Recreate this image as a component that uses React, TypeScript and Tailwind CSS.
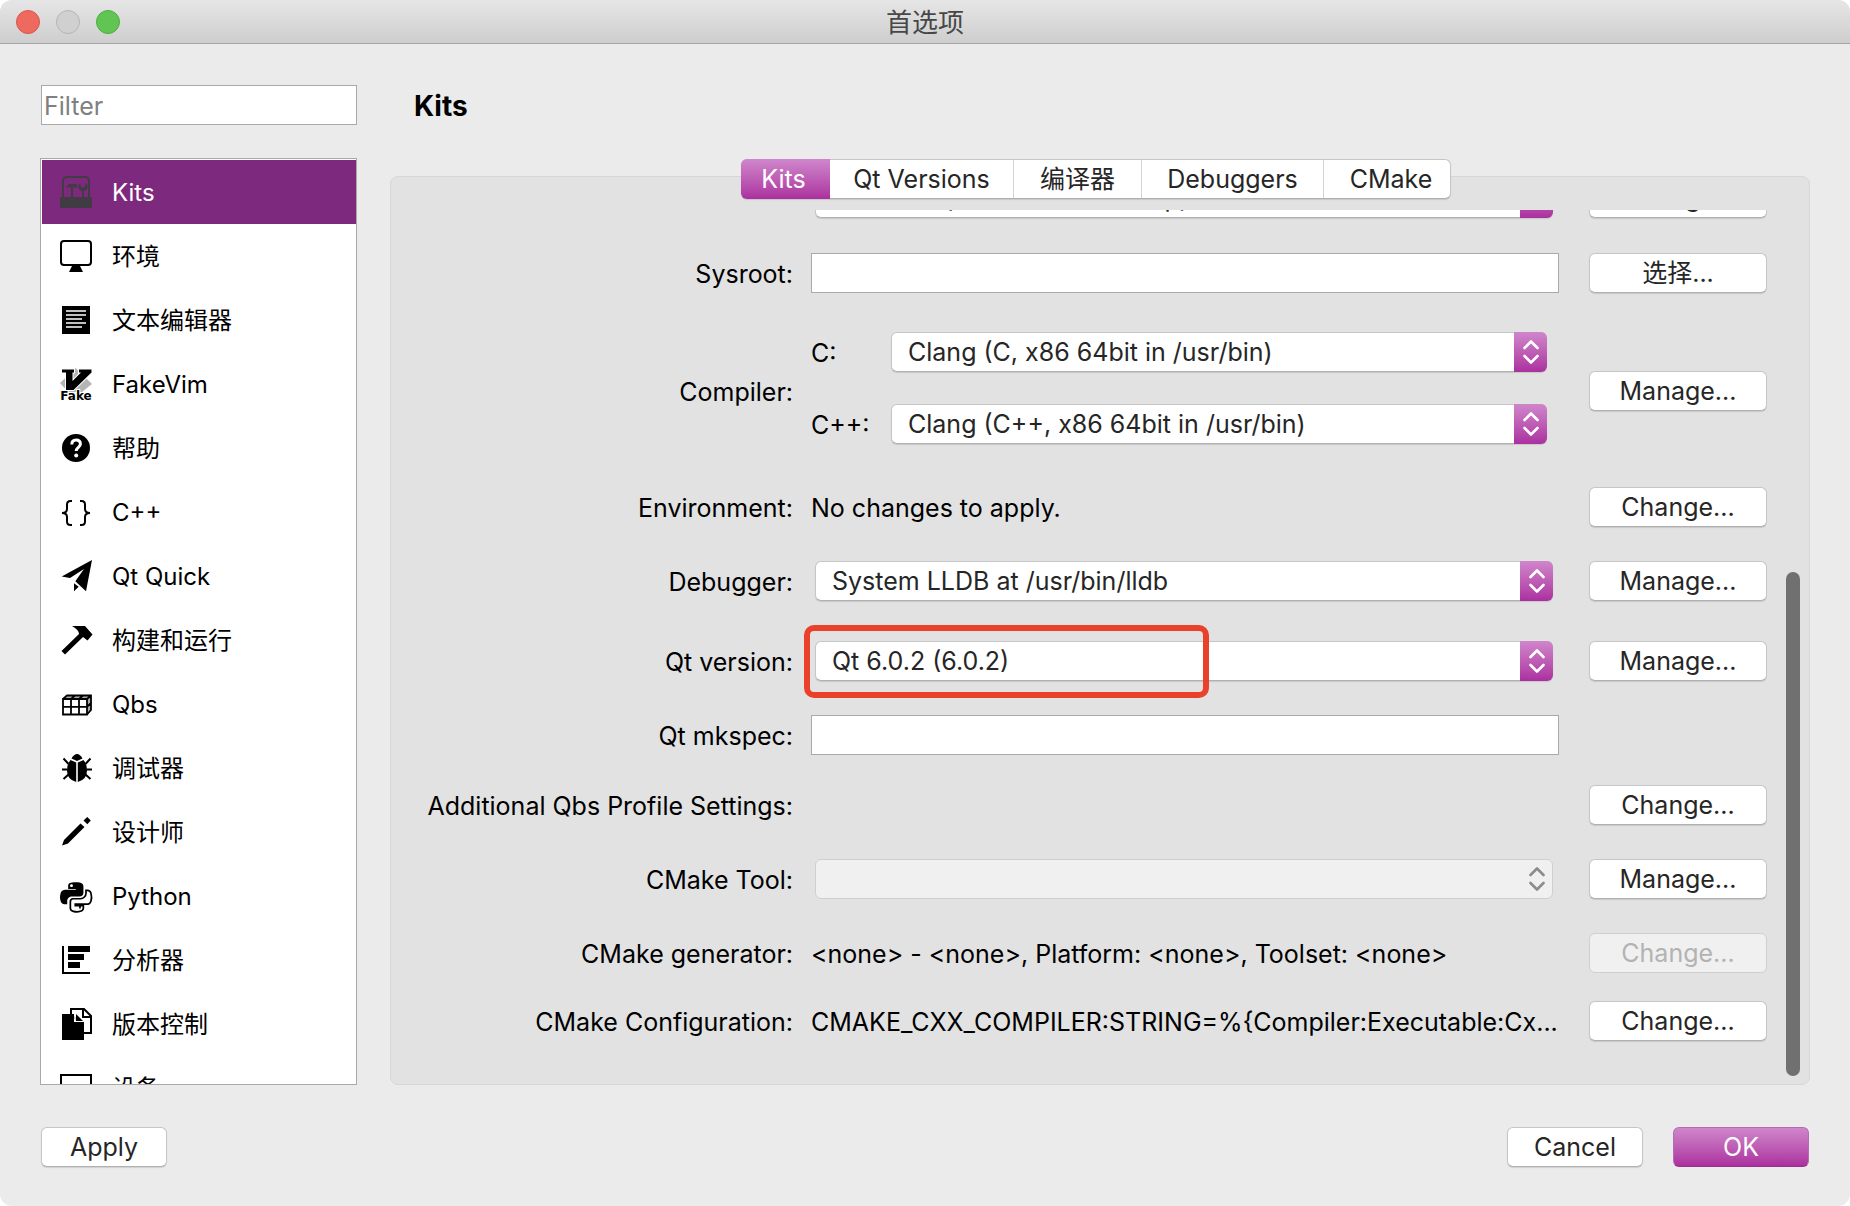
import type { ReactNode } from "react";

const accent = "bg-linear-to-b from-[#cf86cb] to-[#ab2f9f]";
const buttonBase = "h-10 rounded-md border leading-8";
const plainButton =
  "border-[#c6c6c6] border-b-[#b0b0b0] bg-white text-[#262626] shadow-[0_1px_1px_rgba(0,0,0,0.12)]";
const fadedButton = "border-[#cfcfcf] bg-[#f0f0f0] text-[#b3b3b3]";

/* ---------- Sidebar icons, all on a 32 × 32 grid ---------- */

function Icon({ children }: { children: ReactNode }) {
  return (
    <svg viewBox="0 0 32 32" className="size-8 shrink-0 overflow-visible" fill="currentColor" aria-hidden="true">
      {children}
    </svg>
  );
}

const KitsIcon = () => (
  <Icon>
    <g fill="#413c43">
      <path d="M3 21V5a4 4 0 0 1 4-4h18a4 4 0 0 1 4 4v16" fill="none" stroke="#413c43" strokeWidth="2" />
      <path d="M0 21h32v11H0z" />
      <path d="M6.5 10.5 9 8h8v3.500h-4V21h-2v-9.500H6.500z" />
      <path d="M20.500 7v3l2.500 2 2.500-2V7c2 1 2.500 3 2 5-.4 1.600-1.800 2.600-3.500 3V21h-2v-6c-1.700-.4-3.100-1.400-3.500-3-.5-2 0-4 2-5z" />
    </g>
  </Icon>
);

const MonitorIcon = () => (
  <Icon>
    <rect x="1" y="1" width="30" height="24" rx="3" fill="none" stroke="currentColor" strokeWidth="2" />
    <path d="M12 26h8l3 6H9z" />
  </Icon>
);

const TextIcon = () => (
  <Icon>
    <path d="M2 2h28v28H2z" />
    <path d="M6 7h20M6 11h20M6 15h16M6 19h20M6 23h16" stroke="#fff" strokeWidth="1.700" />
  </Icon>
);

const VimIcon = () => (
  <Icon>
    <path d="M15.500 0 32 16 22 24H8L0 15z" fill="#b5b5b5" />
    <path d="M2 1.500h12v3h-1.500V13L21 4.500h-2v-3h12.500v3L13.500 22H6V4.500H2z" stroke="#fff" strokeWidth="2" paintOrder="stroke" />
    <text
      x="16"
      y="32"
      textAnchor="middle"
      fontFamily="DejaVu Sans, sans-serif"
      fontWeight="700"
      fontSize="12"
      stroke="#fff"
      strokeWidth="2"
      paintOrder="stroke"
    >
      Fake
    </text>
  </Icon>
);

const HelpIcon = () => (
  <Icon>
    <circle cx="16" cy="16" r="14" />
    <path d="M11.800 12.500c0-3 1.800-4.500 4.300-4.500s4.300 1.500 4.300 4c0 3.200-4.200 3.400-4.200 7" fill="none" stroke="#fff" strokeWidth="3" />
    <circle cx="16.200" cy="23.500" r="2" fill="#fff" />
  </Icon>
);

const BracesIcon = () => (
  <Icon>
    <path
      d="M12 5H10.500Q7 5 7 8.500V13Q7 17 2 17 7 17 7 21V25.500Q7 29 10.500 29H12M20 5h1.500Q25 5 25 8.500V13Q25 17 30 17 25 17 25 21V25.500Q25 29 21.500 29H20"
      fill="none"
      stroke="currentColor"
      strokeWidth="2"
    />
  </Icon>
);

const PlaneIcon = () => (
  <Icon>
    <path d="M32 0 1.700 16.500 10 18 24 9 15.300 21.300 26 31.300zM14 23.300l4.700 3.400L14 31.300z" />
  </Icon>
);

const HammerIcon = () => (
  <Icon>
    <path d="M12 2h13l7.500 8.500-5 6L23 13 5 30.500 1.500 27 19 10q0-4-7-8z" />
  </Icon>
);

const QbsIcon = () => (
  <Icon>
    <path d="M3 11 7 7.500h24v14.500l-4 4.500V11z" fill="#aaa" />
    <path d="M3 11h24v15.500H3z" fill="#fff" />
    <path
      d="M3 11h24v15.500H3zM3 18.800h24l4-4M11 11v15.500M19 11v15.500M3 11l4-3.500h24V22l-4 4.500M27 11l4-3.500M11 11l4-3.500M19 11l4-3.500"
      fill="none"
      stroke="currentColor"
      strokeWidth="1.800"
    />
  </Icon>
);

const BugIcon = () => (
  <Icon>
    <path d="M11.500 6.500Q14 2 17 2t5.500 4.500L17 9z" />
    <path d="M16.200 10.500 10.500 8Q7 12 7 18.500q0 9 9.200 11.500zM17.800 10.500 23.500 8Q27 12 27 18.500q0 9-9.200 11.500z" />
    <path d="M8.500 12 3.500 6.500M7.500 17.500H2M8.500 22.500l-5 4.500M25.500 12l5-5.500M26.500 17.500H32M25.500 22.500l5 4.500" stroke="currentColor" strokeWidth="2" />
  </Icon>
);

const PencilIcon = () => (
  <Icon>
    <path d="M2 29.500 4 24 20.500 7.500l4 3.500L8 27.500zM27.300 1l3.500 3.500-3.500 3.800-3.800-3.800z" />
  </Icon>
);

const PythonIcon = () => (
  <Icon>
    <g transform="matrix(.0714 0 0 .067 0 0)">
      <path d="M167.800 248.100h106.800c29.700 0 53.400-24.500 53.400-54.300V91.900c0-29-24.400-50.700-53.400-55.600-35.800-5.900-74.700-5.600-106.800.1-45.200 8-53.400 24.700-53.400 55.600v40.700h106.900v13.600h-147c-31.100 0-58.300 18.700-66.800 54.200-9.800 40.700-10.200 66.100 0 108.600 7.600 31.600 25.700 54.200 56.800 54.200H101v-48.800c0-35.300 30.500-66.400 66.800-66.400zm-6.700-142.600c-11.100 0-20.100-9.100-20.100-20.300.1-11.300 9-20.400 20.100-20.400 11 0 20.100 9.200 20.100 20.400s-9 20.300-20.100 20.300z" />
      <path
        d="M434 200c-7.700-30.900-22.300-45-50-45h-20v42c0 44-34 82-76 82H185c-25 0-40 18-40 44v98c0 26 18 40 42 47 33 9.500 64 11 98 0 24-7.500 42-20 42-46v-40H214v-22h178c28 0 32-18 42-48 11-33 10.500-68 0-112zM280 390v34"
        fill="none"
        stroke="currentColor"
        strokeWidth="24"
      />
    </g>
  </Icon>
);

const AnalyzerIcon = () => (
  <Icon>
    <path d="M2 2h2v26h26v2H2zM8 2h22v6H8zM8 10h16v6H8zM8 18h12v6H8z" />
  </Icon>
);

const VersionIcon = () => (
  <Icon>
    <path d="M11 1h13l7 7v17H20V14L11 7z" fill="#fff" stroke="currentColor" strokeWidth="2" />
    <path d="M23 1v8h8" fill="none" stroke="currentColor" strokeWidth="2" />
    <path d="M2 6h12v8h10v18H2z" />
    <path d="M15 5v8.200h9" fill="none" stroke="#fff" strokeWidth="1.600" />
    <path d="M16 6v7h7z" />
  </Icon>
);

const DeviceIcon = () => (
  <Icon>
    <rect x="1" y="3" width="30" height="20" fill="none" stroke="currentColor" strokeWidth="2" />
  </Icon>
);

const categories = [
  { label: "Kits", icon: <KitsIcon /> },
  { label: "环境", icon: <MonitorIcon /> },
  { label: "文本编辑器", icon: <TextIcon /> },
  { label: "FakeVim", icon: <VimIcon /> },
  { label: "帮助", icon: <HelpIcon /> },
  { label: "C++", icon: <BracesIcon /> },
  { label: "Qt Quick", icon: <PlaneIcon /> },
  { label: "构建和运行", icon: <HammerIcon /> },
  { label: "Qbs", icon: <QbsIcon /> },
  { label: "调试器", icon: <BugIcon /> },
  { label: "设计师", icon: <PencilIcon /> },
  { label: "Python", icon: <PythonIcon /> },
  { label: "分析器", icon: <AnalyzerIcon /> },
  { label: "版本控制", icon: <VersionIcon /> },
  { label: "设备", icon: <DeviceIcon /> },
];

/* ---------- Form parts ---------- */

function Combo({ id, label, value, disabled = false }: { id: string; label?: string; value: string; disabled?: boolean }) {
  return (
    <div className="relative flex h-10 min-w-0 flex-1">
      <select
        id={id}
        aria-label={label}
        disabled={disabled}
        className={`h-10 w-full appearance-none rounded-md border pr-10 pb-px pl-4 leading-9 opacity-100 ${
          disabled
            ? "border-[#cfcfcf] bg-[#f0f0f0]"
            : "border-[#c6c6c6] border-b-[#b0b0b0] bg-white text-[#262626] shadow-[0_1px_1px_rgba(0,0,0,0.12)]"
        }`}
      >
        <option>{value}</option>
      </select>
      <span
        className={`pointer-events-none absolute inset-y-0 right-0 flex w-[33px] items-center justify-center rounded-r-md ${
          disabled ? "text-[#8c8c8c]" : `text-white ${accent}`
        }`}
      >
        <svg viewBox="0 0 16 26" className="h-[26px] w-4" fill="none" stroke="currentColor" strokeWidth="2.600" strokeLinecap="round" strokeLinejoin="round" aria-hidden="true">
          <path d="M1.500 9 8 2.500 14.500 9M1.500 17 8 23.500 14.500 17" />
        </svg>
      </span>
    </div>
  );
}

function Row({
  label,
  htmlFor,
  spacing,
  action,
  actionDisabled = false,
  children,
}: {
  label?: string;
  htmlFor?: string;
  spacing: string;
  action?: string;
  actionDisabled?: boolean;
  children?: ReactNode;
}) {
  return (
    <div className={`grid min-h-10 shrink-0 grid-cols-[372px_minmax(0,1fr)_178px] items-center ${spacing}`}>
      <label htmlFor={htmlFor} className="pt-0.5 text-right whitespace-nowrap">
        {label}
      </label>
      <div className="mr-[30px] ml-[18px] min-w-0 whitespace-nowrap">{children}</div>
      {action && (
        <button
          type="button"
          disabled={actionDisabled}
          className={`${buttonBase} w-full ${actionDisabled ? fadedButton : plainButton}`}
        >
          {action}
        </button>
      )}
    </div>
  );
}

const textBox = "block h-10 w-full border border-[#a9a9a9] bg-white px-1 outline-none";

export default function App() {
  return (
    <div className="flex h-screen flex-col overflow-hidden rounded-xl bg-[#ebebeb] font-['Inter','Noto_Sans_CJK_SC',sans-serif] text-[25px] leading-8 text-black">
      <header className="grid h-11 shrink-0 grid-cols-[1fr_auto_1fr] items-center border-b border-[#a6a6a6] bg-linear-to-b from-[#e6e6e6] to-[#cecece] px-4">
        <div className="flex gap-4">
          <button type="button" aria-label="Close" className="size-6 rounded-full border border-[#d9564c] bg-[#ee695e]" />
          <button type="button" aria-label="Minimize" className="size-6 rounded-full border border-[#b5b5b5] bg-[#d0d0d0]" />
          <button type="button" aria-label="Zoom" className="size-6 rounded-full border border-[#50ac44] bg-[#61c554]" />
        </div>
        <span className="pt-0.5 text-[26px] leading-8 text-[#474747]">首选项</span>
      </header>

      <main className="flex min-h-0 flex-1 gap-[33px] pt-[41px] pr-10 pl-10">
        <aside className="flex w-[317px] shrink-0 flex-col">
          <input
            type="text"
            aria-label="Filter"
            placeholder="Filter"
            className="ml-px h-10 shrink-0 border border-[#a9a9a9] bg-white px-0.5 pt-0.5 outline-none placeholder:text-[#808080]"
          />
          <nav className="mt-[33px] min-h-0 flex-1 overflow-hidden border border-[#a9a9a9] bg-white pt-px pl-px">
            <ul>
              {categories.map((item, i) => (
                <li key={item.label}>
                  <button
                    type="button"
                    className={`flex h-16 w-full items-center gap-5 pl-[18px] text-left text-2xl ${
                      i === 0 ? "bg-[#7d297d] text-white" : "text-black"
                    }`}
                  >
                    {item.icon}
                    <span className="pt-0.5">{item.label}</span>
                  </button>
                </li>
              ))}
            </ul>
          </nav>
        </aside>

        <section className="flex min-w-0 flex-1 flex-col">
          <h1 className="ml-6 h-10 pt-px text-[28px] leading-10 font-bold">Kits</h1>

          <div className="z-10 mt-[34px] flex justify-center">
            <div role="tablist" className="mr-2 flex h-10 rounded-md border border-[#c6c6c6] border-b-[#b0b0b0] bg-white text-[#262626] shadow-[0_1px_1px_rgba(0,0,0,0.12)]">
              <button type="button" role="tab" aria-selected="true" className={`-my-px -ml-px w-[89px] rounded-l-md pr-1 text-white ${accent}`}>
                Kits
              </button>
              <button type="button" role="tab" aria-selected="false" className="w-[183px]">
                Qt Versions
              </button>
              <button type="button" role="tab" aria-selected="false" className="w-32 border-l border-[#d4d4d4]">
                编译器
              </button>
              <button type="button" role="tab" aria-selected="false" className="w-[182px] border-l border-[#d4d4d4]">
                Debuggers
              </button>
              <button type="button" role="tab" aria-selected="false" className="w-[127px] border-l border-[#d4d4d4] pl-2">
                CMake
              </button>
            </div>
          </div>

          <div className="-mt-[23px] flex min-h-0 flex-1 rounded-lg border border-[#d6d6d6] bg-[#e2e2e2] pt-[33px] pr-[9px] pb-2 pl-[30px]">
            <div className="flex min-w-0 flex-1 flex-col overflow-hidden">
              <Row spacing="-mt-8" action="Manage...">
                <div className="mr-1.5 ml-1 flex">
                  <Combo id="device" label="Device" value="Local PC (default for Desktop)" />
                </div>
              </Row>
              <Row label="Sysroot:" htmlFor="sysroot" spacing="mt-[35px]" action="选择...">
                <input id="sysroot" type="text" className={textBox} />
              </Row>
              <Row label="Compiler:" spacing="mt-[39px]" action="Manage...">
                <div className="mr-3 mb-1.5 flex flex-col gap-8">
                  <div className="flex items-center">
                    <label htmlFor="compiler-c" className="w-20 pt-0.5">
                      C:
                    </label>
                    <Combo id="compiler-c" value="Clang (C, x86 64bit in /usr/bin)" />
                  </div>
                  <div className="flex items-center">
                    <label htmlFor="compiler-cxx" className="w-20 pt-0.5">
                      C++:
                    </label>
                    <Combo id="compiler-cxx" value="Clang (C++, x86 64bit in /usr/bin)" />
                  </div>
                </div>
              </Row>
              <Row label="Environment:" spacing="mt-[37px]" action="Change...">
                <p className="pt-0.5">No changes to apply.</p>
              </Row>
              <Row label="Debugger:" htmlFor="debugger" spacing="mt-[34px]" action="Manage...">
                <div className="mr-1.5 ml-1 flex">
                  <Combo id="debugger" value="System LLDB at /usr/bin/lldb" />
                </div>
              </Row>
              <Row label="Qt version:" htmlFor="qt-version" spacing="mt-10" action="Manage...">
                <div className="relative mr-1.5 ml-1 flex">
                  <Combo id="qt-version" value="Qt 6.0.2 (6.0.2)" />
                  <span className="pointer-events-none absolute -top-4 -left-[11px] h-[73px] w-[405px] rounded-[10px] border-6 border-[#e9412a]" />
                </div>
              </Row>
              <Row label="Qt mkspec:" htmlFor="mkspec" spacing="mt-[34px]">
                <input id="mkspec" type="text" className={textBox} />
              </Row>
              <Row label="Additional Qbs Profile Settings:" spacing="mt-[30px]" action="Change..." />
              <Row label="CMake Tool:" htmlFor="cmake-tool" spacing="mt-[34px]" action="Manage...">
                <div className="mr-1.5 ml-1 flex">
                  <Combo id="cmake-tool" value="" disabled />
                </div>
              </Row>
              <Row label="CMake generator:" spacing="mt-[34px]" action="Change..." actionDisabled>
                <p className="pt-0.5">&lt;none&gt; - &lt;none&gt;, Platform: &lt;none&gt;, Toolset: &lt;none&gt;</p>
              </Row>
              <Row label="CMake Configuration:" spacing="mt-7" action="Change...">
                <p className="pt-0.5">CMAKE_CXX_COMPILER:STRING=%&#123;Compiler:Executable:Cx...</p>
              </Row>
            </div>
            <div className="ml-[19px] flex w-3.5 shrink-0 flex-col">
              <div className="flex-[362]" />
              <div className="flex-[504] rounded-full bg-[#707070]" />
            </div>
          </div>
        </section>
      </main>

      <footer className="flex h-[121px] shrink-0 items-start pt-[42px] pr-[41px] pl-[41px]">
        <button type="button" className={`${buttonBase} ${plainButton} w-[126px]`}>
          Apply
        </button>
        <button type="button" className={`${buttonBase} ${plainButton} ml-auto w-[136px]`}>
          Cancel
        </button>
        <button type="button" className={`${buttonBase} ml-[30px] w-[136px] border-[#b56bb0] border-b-[#93328a] text-white ${accent}`}>
          OK
        </button>
      </footer>
    </div>
  );
}
